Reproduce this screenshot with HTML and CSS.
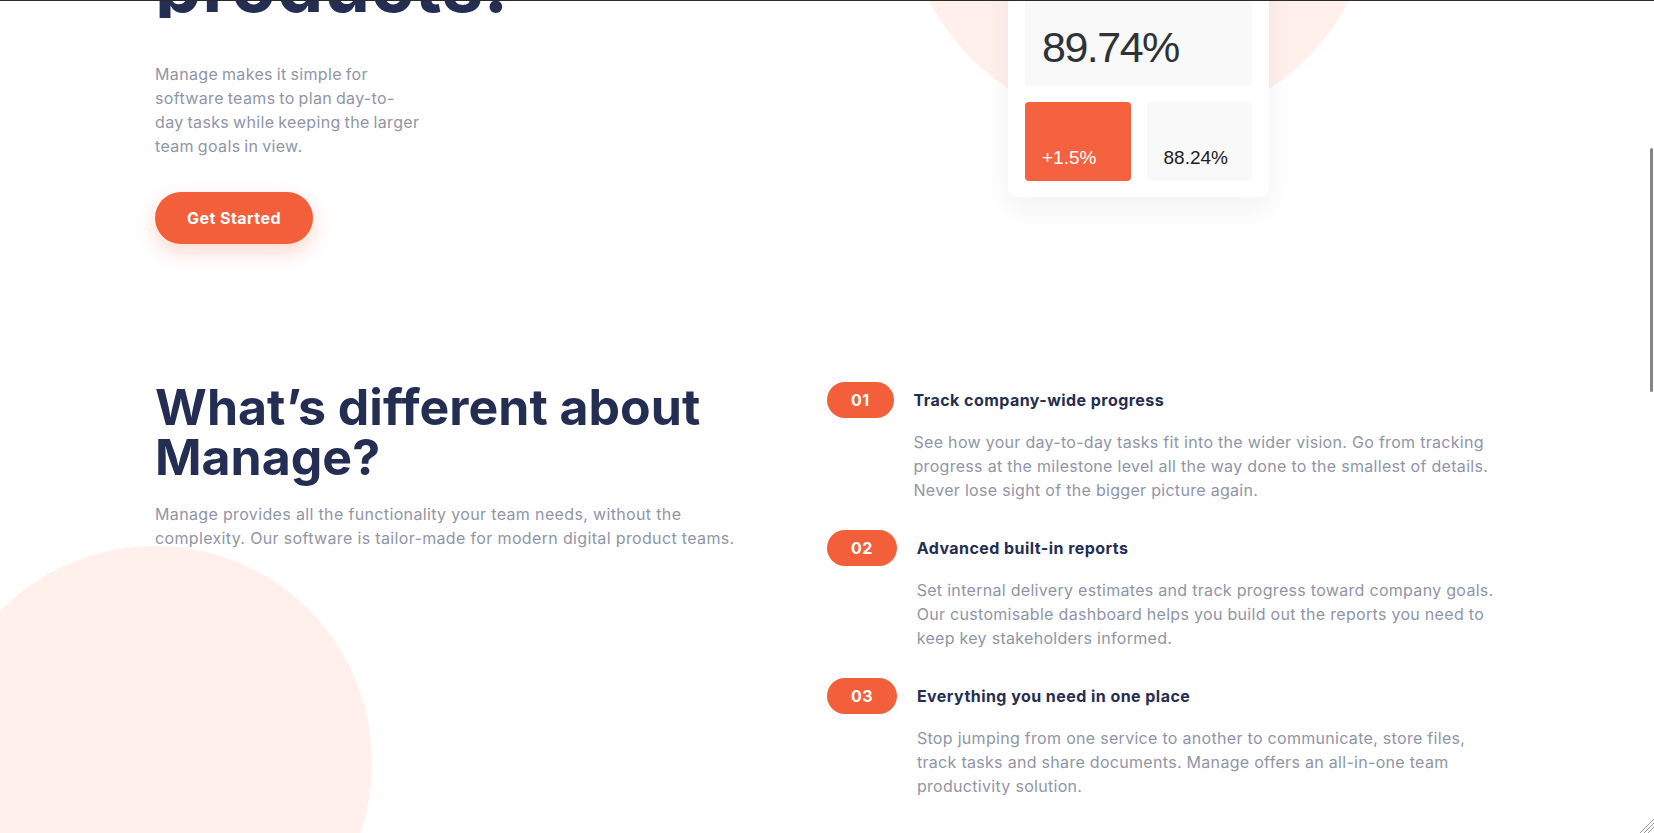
FILE: index.html
```html
<!DOCTYPE html>
<html lang="en">
<head>
<meta charset="utf-8">
<title>Manage</title>
<link rel="stylesheet" href="styles.css">
</head>
<body>
<div class="window-edge"></div>
<main class="page">
  <section class="hero">
    <div class="hero-text">
      <h1 class="hero-title"><span class="line">Bring everyone</span><span class="line">together to build better</span><span class="line line-last">products.</span></h1>
      <p class="hero-copy">Manage makes it simple for software teams to plan day-to-day tasks while keeping the larger team goals in view.</p>
      <a class="btn" href="#">Get Started</a>
    </div>
    <div class="illustration">
      <div class="blob blob-top"></div>
      <div class="stat-card">
        <div class="stat-main"><span>89.74%</span></div>
        <div class="stat-row">
          <div class="stat-box stat-accent"><span>+1.5%</span></div>
          <div class="stat-box stat-plain"><span>88.24%</span></div>
        </div>
      </div>
    </div>
  </section>

  <section class="features">
    <div class="blob blob-bottom"></div>
    <div class="features-intro">
      <h2 class="features-title">What’s different about Manage?</h2>
      <p class="features-copy">Manage provides all the functionality your team needs, without the complexity. Our software is tailor-made for modern digital product teams.</p>
    </div>
    <ol class="feature-list">
      <li class="feature">
        <span class="badge">01</span>
        <div class="feature-body">
          <h3 class="feature-title">Track company-wide progress</h3>
          <p class="feature-copy">See how your day-to-day tasks fit into the wider vision. Go from tracking progress at the milestone level all the way done to the smallest of details. Never lose sight of the bigger picture again.</p>
        </div>
      </li>
      <li class="feature">
        <span class="badge">02</span>
        <div class="feature-body">
          <h3 class="feature-title">Advanced built-in reports</h3>
          <p class="feature-copy">Set internal delivery estimates and track progress toward company goals. Our customisable dashboard helps you build out the reports you need to keep key stakeholders informed.</p>
        </div>
      </li>
      <li class="feature">
        <span class="badge">03</span>
        <div class="feature-body">
          <h3 class="feature-title">Everything you need in one place</h3>
          <p class="feature-copy">Stop jumping from one service to another to communicate, store files, track tasks and share documents. Manage offers an all-in-one team productivity solution.</p>
        </div>
      </li>
    </ol>
  </section>
</main>
<div class="scrollbar-thumb"></div>
<svg class="resize-grip" width="16" height="16" viewBox="0 0 16 16" aria-hidden="true">
  <path d="M16 2 L2 16 M16 6 L6 16 M16 10 L10 16" stroke="#9a9a9a" stroke-width="1" fill="none"/>
</svg>
</body>
</html>
```
FILE: styles.css
```css
* { box-sizing: border-box; }

html {
  background: #ffffff;
  overflow: hidden;
  height: 100%;
}

body {
  margin: 0;
  padding: 0;
  font-family: "Inter", "Liberation Sans", sans-serif;
  color: #242d52;
  -webkit-font-smoothing: antialiased;
}

.window-edge {
  position: fixed;
  top: 0;
  left: 0;
  right: 0;
  height: 1px;
  background: #2b2b2b;
  z-index: 10;
}

.page {
  padding: 0 155px;
}

/* ---------- hero ---------- */
.hero {
  display: flex;
  align-items: flex-start;
  margin-top: -228px;
}

.hero-text {
  width: 853px;
  flex: none;
}

.hero-title {
  margin: 0;
  font-size: 74px;
  line-height: 90px;
  font-weight: 700;
  letter-spacing: 0.5px;
  white-space: nowrap;
  color: #242d52;
}

.hero-title .line { display: block; }

.hero-title .line-last {
  line-height: 66px;
  height: 66px;
  overflow: hidden;
}

.hero-copy {
  margin: 44px 0 0;
  max-width: 265.5px;
  font-size: 16px;
  line-height: 24px;
  letter-spacing: 0.35px;
  word-spacing: -1px;
  color: #9095a7;
}

.btn {
  display: inline-flex;
  align-items: center;
  justify-content: center;
  margin-top: 34px;
  width: 158px;
  height: 52px;
  border-radius: 26px;
  background: #f25f3a;
  color: #ffffff;
  font-size: 16px;
  font-weight: 700;
  letter-spacing: 0.45px;
  text-decoration: none;
  box-shadow: 0 8px 20px rgba(242, 95, 58, 0.25);
}

.illustration {
  position: relative;
  width: 261px;
  flex: none;
}

.blob {
  position: absolute;
  border-radius: 50%;
  background: #fff0ec;
  z-index: 0;
}

.blob-top {
  width: 474px;
  height: 474px;
  left: -106px;
  top: -118px;
}

.stat-card {
  position: relative;
  z-index: 1;
  background: #ffffff;
  border-radius: 10px;
  padding: 17px 17px 16px;
  box-shadow: 0 12px 28px rgba(40, 40, 60, 0.06);
  font-family: "Liberation Sans", "Inter", sans-serif;
}

.stat-main {
  height: 297px;
  background: #f9f9f9;
  border-radius: 4px;
  display: flex;
  align-items: flex-end;
  padding: 0 17px 17px;
  font-size: 43px;
  line-height: 1;
  letter-spacing: -1.5px;
  color: #2f3236;
}

.stat-row {
  display: flex;
  gap: 16px;
  margin-top: 16px;
}

.stat-box {
  flex: 1;
  height: 79px;
  border-radius: 4px;
  display: flex;
  align-items: flex-end;
  padding: 0 17px 14px;
  font-size: 19px;
  line-height: 1;
}

.stat-accent { background: #f4623f; color: #ffffff; }
.stat-plain { background: #f9f9f9; color: #1d2025; }

/* ---------- features ---------- */
.features {
  position: relative;
  display: grid;
  grid-template-columns: 1fr 1fr;
  margin-top: 138px;
  padding-bottom: 240px;
}

.blob-bottom {
  width: 434px;
  height: 434px;
  left: -217px;
  top: 164px;
}

.features-intro {
  position: relative;
  z-index: 1;
}

.features-title {
  margin: 0;
  font-size: 50px;
  line-height: 50px;
  font-weight: 700;
  color: #242d52;
  max-width: 600px;
}

.features-copy {
  margin: 20px 0 0;
  max-width: 590px;
  font-size: 16px;
  line-height: 24px;
  letter-spacing: 0.35px;
  color: #9095a7;
}

.feature-list {
  position: relative;
  z-index: 1;
  list-style: none;
  margin: 0;
  padding: 0;
  display: flex;
  flex-direction: column;
  gap: 28px;
}

.feature {
  display: flex;
  align-items: flex-start;
  gap: 20px;
}

.badge {
  flex: none;
  height: 36px;
  padding: 0 24px;
  border-radius: 18px;
  background: #f25f3a;
  color: #ffffff;
  font-size: 16px;
  font-weight: 700;
  letter-spacing: 0.4px;
  display: inline-flex;
  align-items: center;
}

.feature-body { flex: 1; }

.feature-title {
  margin: 0;
  font-size: 16px;
  line-height: 36px;
  font-weight: 700;
  letter-spacing: 0.45px;
  color: #242d52;
}

.feature-copy {
  margin: 12px 0 0;
  font-size: 16px;
  line-height: 24px;
  letter-spacing: 0.3px;
  color: #9095a7;
}

/* ---------- window chrome overlays ---------- */
.scrollbar-thumb {
  position: fixed;
  right: 1px;
  top: 148px;
  width: 3px;
  height: 244px;
  border-radius: 2px;
  background: #858585;
}

.resize-grip {
  position: fixed;
  right: 0;
  bottom: 0;
}
```
